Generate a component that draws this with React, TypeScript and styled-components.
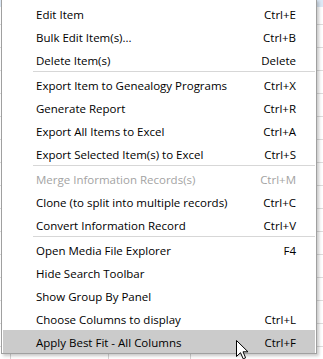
import React from 'react';
import styled, { createGlobalStyle } from 'styled-components';

const GlobalStyle = createGlobalStyle`
  html, body {
    margin: 0;
    padding: 0;
    background: #ffffff;
  }
  body {
    font-family: "Open Sans", "Noto Sans", sans-serif;
  }
`;

type MenuEntry =
  | { kind: 'item'; label: string; shortcut?: string; disabled?: boolean; active?: boolean }
  | { kind: 'sep' };

const entries: MenuEntry[] = [
  { kind: 'item', label: 'Edit Item', shortcut: 'Ctrl+E' },
  { kind: 'item', label: 'Bulk Edit Item(s)...', shortcut: 'Ctrl+B' },
  { kind: 'item', label: 'Delete Item(s)', shortcut: 'Delete' },
  { kind: 'sep' },
  { kind: 'item', label: 'Export Item to Genealogy Programs', shortcut: 'Ctrl+X' },
  { kind: 'item', label: 'Generate Report', shortcut: 'Ctrl+R' },
  { kind: 'item', label: 'Export All Items to Excel', shortcut: 'Ctrl+A' },
  { kind: 'item', label: 'Export Selected Item(s) to Excel', shortcut: 'Ctrl+S' },
  { kind: 'sep' },
  { kind: 'item', label: 'Merge Information Records(s)', shortcut: 'Ctrl+M', disabled: true },
  { kind: 'item', label: 'Clone (to split into multiple records)', shortcut: 'Ctrl+C' },
  { kind: 'item', label: 'Convert Information Record', shortcut: 'Ctrl+V' },
  { kind: 'sep' },
  { kind: 'item', label: 'Open Media File Explorer', shortcut: 'F4' },
  { kind: 'item', label: 'Hide Search Toolbar' },
  { kind: 'item', label: 'Show Group By Panel' },
  { kind: 'item', label: 'Choose Columns to display', shortcut: 'Ctrl+L' },
  { kind: 'item', label: 'Apply Best Fit - All Columns', shortcut: 'Ctrl+F', active: true },
];

const Page = styled.div`
  position: relative;
  width: 323px;
  height: 359px;
  overflow: hidden;
  font-size: 11.5px;
  color: #000;
`;

/* the data grid that sits behind the context menu */
const Grid = styled.div`
  display: flex;
  flex-direction: column;
`;

const HeaderStrip = styled.div`
  height: 7px;
  background: #dde9f6;
`;

const GridRow = styled.div<{ h: number }>`
  display: grid;
  grid-template-columns: 11px 98px 82px 1fr;
  height: ${p => p.h}px;
  box-sizing: border-box;
  border-bottom: 1px solid #dcdcdc;
`;

const Cell = styled.div<{ align?: string }>`
  border-right: 1px solid #d4d4d4;
  padding: 0 3px;
  display: flex;
  align-items: center;
  justify-content: ${p => p.align || 'flex-start'};
  white-space: nowrap;
  overflow: hidden;
  &:last-child {
    border-right: none;
    padding-left: 8px;
  }
`;

const Menu = styled.div`
  position: absolute;
  top: -1px;
  left: 1px;
  width: 316px;
  box-sizing: border-box;
  background: #fff;
  border: 1px solid #a0a0a0;
  padding: 2px 1px 0 1px;
  box-shadow: 2px 2px 3px rgba(0, 0, 0, 0.22);
`;

const Item = styled.div<{ disabled?: boolean; active?: boolean }>`
  display: flex;
  align-items: center;
  justify-content: space-between;
  height: 23px;
  box-sizing: border-box;
  padding: 1px 19px 0 33px;
  color: ${p => (p.disabled ? '#a3a3a3' : '#000')};
  background: ${p => (p.active ? '#cbcbcb' : 'transparent')};
  white-space: nowrap;
`;

const Shortcut = styled.span`
  margin-left: 16px;
`;

const Separator = styled.div`
  height: 1px;
  margin: 0 0 1px 30px;
  background: #d7d7d7;
`;

const Cursor = styled.svg`
  position: absolute;
  left: 236px;
  top: 340px;
`;

const rowHeights = [18, ...Array(15).fill(23)];

export default function App() {
  return (
    <>
      <GlobalStyle />
      <Page>
        <Grid>
          <HeaderStrip />
          {rowHeights.map((h, i) => (
            <GridRow key={i} h={h}>
              <Cell />
              <Cell />
              <Cell />
              <Cell />
            </GridRow>
          ))}
          <GridRow h={23}>
            <Cell align="flex-end">0)</Cell>
            <Cell>Marion</Cell>
            <Cell align="center">2006</Cell>
            <Cell>Wales</Cell>
          </GridRow>
        </Grid>
        <Menu>
          {entries.map((e, i) =>
            e.kind === 'sep' ? (
              <Separator key={i} />
            ) : (
              <Item key={i} disabled={e.disabled} active={e.active}>
                <span>{e.label}</span>
                {e.shortcut && <Shortcut>{e.shortcut}</Shortcut>}
              </Item>
            )
          )}
        </Menu>
        <Cursor width="13" height="20" viewBox="0 0 13 20">
          <path
            d="M0.5 0.5 L0.5 16.5 L4.5 12.7 L7.2 18.8 L9.6 17.8 L7 11.8 L12 11.8 Z"
            fill="#fff"
            stroke="#000"
            strokeWidth="1"
            strokeLinejoin="miter"
          />
        </Cursor>
      </Page>
    </>
  );
}
